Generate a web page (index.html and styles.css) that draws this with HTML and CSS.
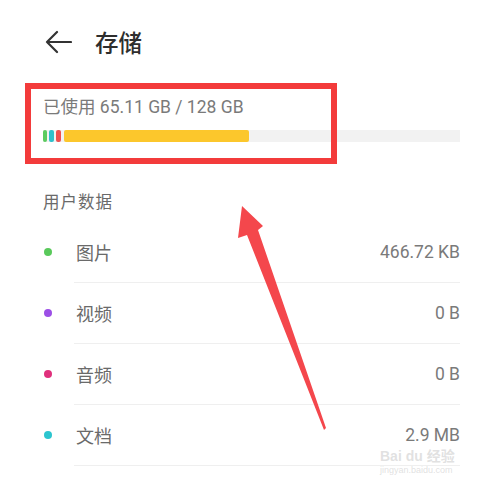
FILE: index.html
```html
<!DOCTYPE html>
<html lang="zh">
<head>
<meta charset="utf-8">
<link rel="stylesheet" href="styles.css">
</head>
<body>
<div class="page">
  <header class="header">
    <svg class="back" width="28" height="24" viewBox="0 0 28 24">
      <path d="M13 2 L3 12 L13 22 M3 12 H27" fill="none" stroke="#333" stroke-width="2.2" stroke-linecap="round" stroke-linejoin="round"/>
    </svg>
    <h1 class="title">存储</h1>
  </header>

  <section class="usage">
    <div class="usage-text">已使用 65.11 GB / 128 GB</div>
    <div class="track">
      <span class="seg seg-green"></span>
      <span class="seg seg-teal"></span>
      <span class="seg seg-red"></span>
      <span class="seg seg-yellow" style="width:185px"></span>
    </div>
  </section>

  <div class="section-label">用户数据</div>

  <ul class="list">
    <li class="row"><span class="dot dot-green"></span><div class="row-body"><span class="name">图片</span><span class="value">466.72 KB</span></div></li>
    <li class="row"><span class="dot dot-purple"></span><div class="row-body"><span class="name">视频</span><span class="value">0 B</span></div></li>
    <li class="row"><span class="dot dot-pink"></span><div class="row-body"><span class="name">音频</span><span class="value">0 B</span></div></li>
    <li class="row"><span class="dot dot-cyan"></span><div class="row-body"><span class="name">文档</span><span class="value">2.9 MB</span></div></li>
  </ul>

  <div class="highlight"></div>
  <svg class="arrow" width="495" height="479" viewBox="0 0 495 479">
    <polygon points="242,206 263,226 258,230 326,428 324,430 247,235 238,238" fill="#f4474c"/>
  </svg>
  <div class="watermark"><span class="wm-logo">Bai du 经验</span><span class="wm-url">jingyan.baidu.com</span></div>
</div>
</body>
</html>
```

FILE: styles.css
```css
* { box-sizing: border-box; }
html, body { margin: 0; padding: 0; background: #fff; }
body {
  font-family: Roboto, "Noto Sans CJK SC", sans-serif;
  width: 495px;
  height: 479px;
  overflow: hidden;
}
.page {
  position: relative;
  padding: 0 35px 0 43px;
  height: 479px;
}
.header {
  height: 84px;
  display: flex;
  align-items: center;
}
.back { margin-left: 1px; }
.title {
  margin: 0 0 0 23px;
  font-size: 23.5px;
  font-weight: 500;
  color: #2e2e2e;
  font-family: "Noto Sans CJK SC", sans-serif;
}
.usage { padding-top: 13px; }
.usage-text {
  font-size: 17.5px;
  line-height: 20px;
  color: #7a7a7a;
}
.track {
  margin-top: 13px;
  height: 12px;
  background: #f2f2f2;
  display: flex;
  gap: 2px;
}
.seg { height: 12px; border-radius: 2px; }
.seg-green { width: 4px; background: #5bcb5f; }
.seg-teal { width: 5px; background: #2fc0cc; }
.seg-red { width: 5px; background: #ef5050; }
.seg-yellow { background: #fcc72c; margin-left: 1px; }

.section-label {
  margin-top: 49px;
  font-size: 16.5px;
  letter-spacing: 1px;
  line-height: 20px;
  color: #6a6a6a;
  font-family: "Noto Sans CJK SC", sans-serif;
}
.list { list-style: none; margin: 11px 0 0; padding: 0; }
.row { display: flex; align-items: stretch; height: 61px; }
.dot {
  width: 8px; height: 8px; border-radius: 50%;
  margin: 26px 22px 0 1px;
  flex: none;
}
.dot-green { background: #59c95b; }
.dot-purple { background: #9c4fe6; }
.dot-pink { background: #e0307c; }
.dot-cyan { background: #2cc5cf; }
.row-body {
  flex: 1;
  display: flex;
  align-items: center;
  justify-content: space-between;
  border-bottom: 1px solid #efefef;
  padding-left: 2px;
}
.name {
  font-size: 18px;
  color: #6a6a6a;
  font-family: "Noto Sans CJK SC", sans-serif;
}
.value {
  font-size: 17.5px;
  color: #7a7a7a;
}
.highlight {
  position: absolute;
  left: 25px; top: 83px;
  width: 312px; height: 81px;
  border: 6px solid #f33b3b;
}
.arrow { position: absolute; left: 0; top: 0; pointer-events: none; }
.watermark {
  position: absolute;
  left: 380px; top: 449px;
  display: flex; flex-direction: column;
  color: rgba(200,200,200,0.55);
  line-height: 1;
}
.wm-logo { font-size: 14px; font-weight: 700; font-family: "Liberation Sans", "Noto Sans CJK SC", sans-serif; }
.wm-url { font-size: 9px; margin-top: 3px; font-family: "Liberation Sans", sans-serif; }
```
